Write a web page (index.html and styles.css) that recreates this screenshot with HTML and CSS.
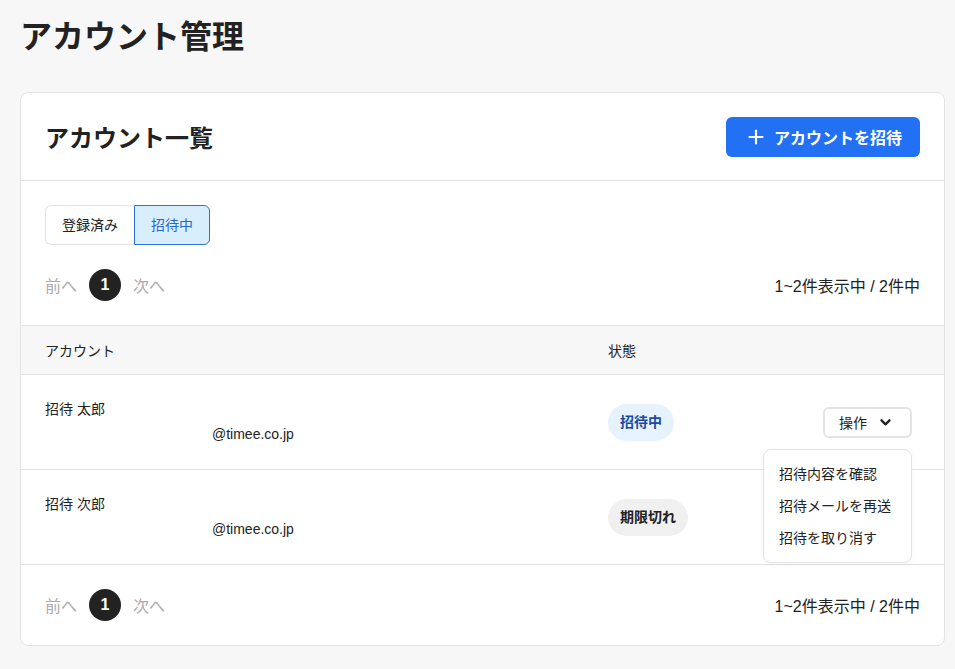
FILE: index.html
```html
<!DOCTYPE html>
<html lang="ja">
<head>
    <meta charset="UTF-8">
    <meta name="viewport" content="width=device-width, initial-scale=1.0">
    <title>アカウント管理</title>
    <link rel="stylesheet" href="styles.css">
</head>
<body>

    <div class="page">
        <h1 class="page-title">アカウント管理</h1>

        <div class="card">
            <div class="card-header">
                <h2>アカウント一覧</h2>
                <button class="invite-button" type="button">
                    <svg width="16" height="16" viewBox="0 0 16 16"><path d="M8 1.5v13M1.5 8h13" stroke="#fff" stroke-width="2.2" stroke-linecap="round"/></svg>
                    アカウントを招待
                </button>
            </div>

            <div class="card-body">
                <div class="tabs">
                    <div class="tab">登録済み</div>
                    <div class="tab active">招待中</div>
                </div>

                <div class="pager">
                    <div class="pager-links">
                        <span class="pager-text">前へ</span>
                        <span class="pager-num">1</span>
                        <span class="pager-text">次へ</span>
                    </div>
                    <div class="pager-count">1~2件表示中 / 2件中</div>
                </div>
            </div>

            <div class="table">
                <div class="table-head">
                    <div>アカウント</div>
                    <div>状態</div>
                    <div></div>
                </div>

                <div class="table-row">
                    <div class="account">
                        <div class="account-name">招待 太郎</div>
                        <div class="account-mail">@timee.co.jp</div>
                    </div>
                    <div><span class="badge invited">招待中</span></div>
                    <div class="actions">
                        <button class="action-button" type="button">
                            操作
                            <svg width="13" height="13" viewBox="0 0 12 12"><path d="M2.3 4L6 7.7 9.7 4" fill="none" stroke="#222" stroke-width="2.2" stroke-linecap="round" stroke-linejoin="round"/></svg>
                        </button>
                        <ul class="menu">
                            <li>招待内容を確認</li>
                            <li>招待メールを再送</li>
                            <li>招待を取り消す</li>
                        </ul>
                    </div>
                </div>

                <div class="table-row">
                    <div class="account">
                        <div class="account-name">招待 次郎</div>
                        <div class="account-mail">@timee.co.jp</div>
                    </div>
                    <div><span class="badge expired">期限切れ</span></div>
                    <div class="actions"></div>
                </div>
            </div>

            <div class="card-footer">
                <div class="pager">
                    <div class="pager-links">
                        <span class="pager-text">前へ</span>
                        <span class="pager-num">1</span>
                        <span class="pager-text">次へ</span>
                    </div>
                    <div class="pager-count">1~2件表示中 / 2件中</div>
                </div>
            </div>
        </div>
    </div>

</body>
</html>
```

FILE: styles.css
```css
body {
    font-family: "Liberation Sans", "Noto Sans CJK JP", sans-serif;
    background-color: #f7f7f7;
    color: #222;
    margin: 0;
    padding: 0;
}
.page {
    padding: 16px 10px 20px 20px;
}
.page-title {
    font-size: 32px;
    line-height: 42px;
    font-weight: bold;
    margin: 0 0 34px;
    color: #222;
}
.card {
    background-color: #fff;
    border: 1px solid #e3e3e3;
    border-radius: 8px;
}
.card-header {
    display: flex;
    justify-content: space-between;
    align-items: center;
    padding: 0 24px;
    height: 87px;
    border-bottom: 1px solid #e3e3e3;
}
.card-header h2 {
    font-size: 24px;
    font-weight: bold;
    margin: 0;
}
.invite-button {
    display: flex;
    align-items: center;
    gap: 10px;
    height: 40px;
    padding: 0 18px 0 22px;
    background-color: #2271f4;
    color: #fff;
    border: none;
    border-radius: 6px;
    font-family: inherit;
    font-size: 16px;
    font-weight: bold;
}
.card-body {
    padding: 24px 24px 24px;
}
.tabs {
    display: flex;
}
.tab {
    height: 38px;
    line-height: 38px;
    padding: 0 16px;
    font-size: 14px;
    border: 1px solid #e3e3e3;
}
.tab:first-child {
    border-radius: 6px 0 0 6px;
    border-right: none;
}
.tab.active {
    background-color: #d9eefd;
    border-color: #2b70e0;
    color: #2a66cc;
    border-radius: 0 6px 6px 0;
}
.pager {
    display: flex;
    justify-content: space-between;
    align-items: center;
    margin-top: 24px;
}
.card-footer .pager {
    margin-top: 0;
}
.pager-links {
    display: flex;
    align-items: center;
    gap: 12px;
}
.pager-text {
    font-size: 16px;
    color: #aaa;
}
.pager-num {
    width: 32px;
    height: 32px;
    line-height: 32px;
    border-radius: 50%;
    background-color: #222;
    color: #fff;
    text-align: center;
    font-size: 16px;
    font-weight: bold;
}
.pager-count {
    font-size: 16px;
}
.table-head, .table-row {
    display: grid;
    grid-template-columns: 563px 1fr 160px;
    align-items: center;
    padding: 0 32px 0 24px;
    border-bottom: 1px solid #e3e3e3;
}
.table-head {
    height: 48px;
    background-color: #f7f7f7;
    border-top: 1px solid #e3e3e3;
    font-size: 14px;
}
.table-row {
    height: 94px;
    font-size: 14px;
}
.account-name {
    line-height: 20px;
    margin-top: -2px;
}
.account-mail {
    line-height: 20px;
    margin-top: 5px;
    padding-left: 167px;
}
.badge {
    display: inline-block;
    height: 37px;
    line-height: 37px;
    padding: 0 12px;
    border-radius: 19px;
    font-size: 14px;
    font-weight: bold;
}
.badge.invited {
    background-color: #e6f3fe;
    color: #1b4b9f;
}
.badge.expired {
    background-color: #f0f0f0;
    color: #222;
}
.actions {
    position: relative;
    display: flex;
    justify-content: flex-end;
}
.action-button {
    display: flex;
    align-items: center;
    gap: 12px;
    height: 31px;
    padding: 0 18px 0 14px;
    background-color: #fff;
    border: 2px solid #e3e3e3;
    border-radius: 6px;
    font-family: inherit;
    font-size: 14px;
    color: #222;
}
.menu {
    position: absolute;
    top: 42px;
    right: 0;
    width: 147px;
    margin: 0;
    padding: 8px 0;
    list-style: none;
    background-color: #fff;
    border: 1px solid #e3e3e3;
    border-radius: 8px;
    box-shadow: 0 2px 6px rgba(0, 0, 0, 0.04);
    z-index: 2;
}
.menu li {
    padding: 6px 16px 6px 15px;
    line-height: 20px;
    font-size: 14px;
}
.card-footer {
    padding: 24px;
}
```
